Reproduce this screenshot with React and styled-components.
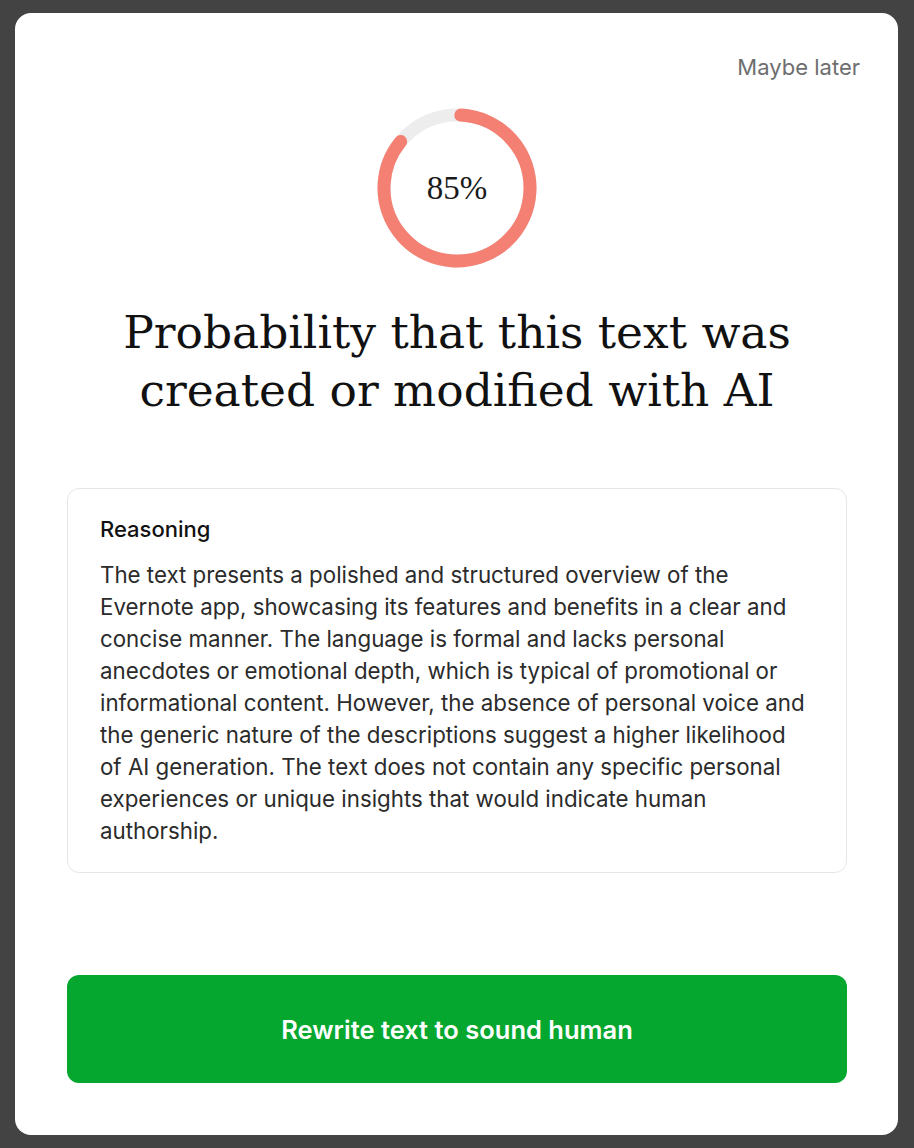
import styled, { createGlobalStyle } from 'styled-components';

const GlobalStyle = createGlobalStyle`
  html, body {
    margin: 0;
    padding: 0;
    background: #434343;
  }
  * {
    box-sizing: border-box;
  }
`;

const RADIUS = 73;
const CIRC = 2 * Math.PI * RADIUS;

const ScoreRing = ({ value }) => (
    <RingWrap>
        <svg width="160" height="160" viewBox="0 0 160 160">
            <circle cx="80" cy="80" r={RADIUS} fill="none" stroke="#EDEDED" strokeWidth="13" />
            <circle
                cx="80"
                cy="80"
                r={RADIUS}
                fill="none"
                stroke="#F47F73"
                strokeWidth="13"
                strokeLinecap="round"
                strokeDasharray={`${(CIRC * value) / 100} ${CIRC}`}
                transform="rotate(-87 80 80)"
            />
        </svg>
        <RingLabel>{value}%</RingLabel>
    </RingWrap>
);

export default function App() {
    return (
        <>
            <GlobalStyle />
            <Page>
                <Card>
                    <TopBar>
                        <LaterButton>Maybe later</LaterButton>
                    </TopBar>
                    <ScoreRing value={85} />
                    <Title>
                        Probability that this text was
                        <br />
                        created or modified with AI
                    </Title>
                    <ReasonBox>
                        <ReasonTitle>Reasoning</ReasonTitle>
                        <ReasonText>
                            The text presents a polished and structured overview of the Evernote app,
                            showcasing its features and benefits in a clear and concise manner. The
                            language is formal and lacks personal anecdotes or emotional depth, which is
                            typical of promotional or informational content. However, the absence of
                            personal voice and the generic nature of the descriptions suggest a higher
                            likelihood of AI generation. The text does not contain any specific personal
                            experiences or unique insights that would indicate human authorship.
                        </ReasonText>
                    </ReasonBox>
                    <RewriteButton>Rewrite text to sound human</RewriteButton>
                </Card>
            </Page>
        </>
    );
}

const Page = styled.div`
    min-height: 1148px;
    padding: 13px 16px 13px 15px;
`;

const Card = styled.div`
    display: flex;
    flex-direction: column;
    align-items: center;
    background: #ffffff;
    border-radius: 16px;
    min-height: 1122px;
    padding: 0 51px 52px 52px;
`;

const TopBar = styled.div`
    align-self: stretch;
    display: flex;
    justify-content: flex-end;
    margin-right: -13px;
    padding-top: 40px;
`;

const LaterButton = styled.button`
    border: none;
    background: transparent;
    padding: 0;
    font-family: Inter, "Liberation Sans", sans-serif;
    font-size: 22px;
    line-height: 28px;
    color: #6e6e6e;
    cursor: pointer;
`;

const RingWrap = styled.div`
    position: relative;
    width: 160px;
    height: 160px;
    margin-top: 27px;

    svg {
        display: block;
    }
`;

const RingLabel = styled.span`
    position: absolute;
    inset: 0;
    display: flex;
    align-items: center;
    justify-content: center;
    font-family: "Liberation Serif", serif;
    font-size: 33px;
    color: #1a1a1a;
`;

const Title = styled.h1`
    margin: 36px 0 0;
    text-align: center;
    font-family: "DejaVu Serif", "Liberation Serif", serif;
    font-weight: 400;
    font-size: 45.5px;
    line-height: 58px;
    color: #111111;
`;

const ReasonBox = styled.section`
    align-self: stretch;
    margin-top: 68px;
    border: 1px solid #e6e6e6;
    border-radius: 12px;
    padding: 26px 37px 25px 32px;
`;

const ReasonTitle = styled.h2`
    margin: 0;
    font-family: Inter, "Liberation Sans", sans-serif;
    font-weight: 500;
    font-size: 22px;
    line-height: 28px;
    color: #111111;
`;

const ReasonText = styled.p`
    margin: 16px 0 0;
    font-family: Inter, "Liberation Sans", sans-serif;
    font-size: 22.3px;
    line-height: 32px;
    color: #2b2b2b;
`;

const RewriteButton = styled.button`
    align-self: stretch;
    margin-top: auto;
    height: 108px;
    border: none;
    border-radius: 12px;
    background: #06A72F;
    color: #ffffff;
    font-family: Inter, "Liberation Sans", sans-serif;
    font-weight: 600;
    font-size: 25.5px;
    cursor: pointer;
`;
